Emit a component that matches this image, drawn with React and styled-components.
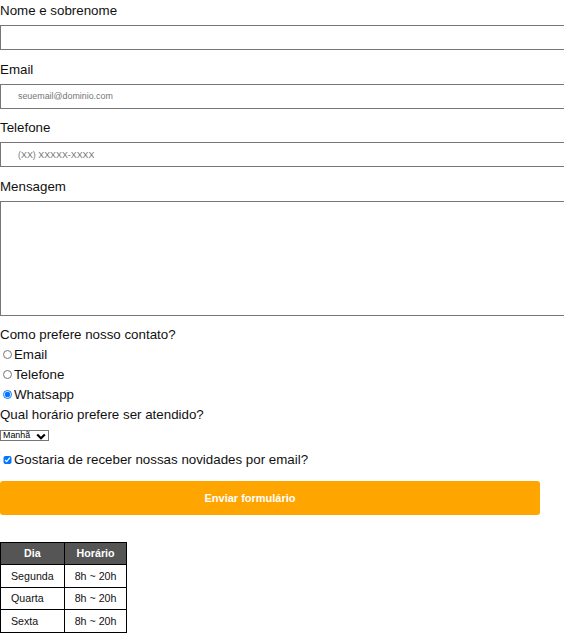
import React from "react";
import styled, { createGlobalStyle } from "styled-components";

const GlobalStyle = createGlobalStyle`
  html, body {
    margin: 0;
    padding: 0;
    background: #fff;
    overflow-x: hidden;
  }
  body {
    font-family: "Liberation Sans", Arial, sans-serif;
    color: #111;
  }
`;

const Form = styled.form`
  display: block;
  overflow: hidden;
  padding-bottom: 20px;
`;

const FieldLabel = styled.label`
  display: block;
  font-size: 13.33px;
  line-height: 21px;
  height: 21px;
`;

const TextInput = styled.input`
  display: block;
  box-sizing: content-box;
  width: 100%;
  height: 23px;
  margin: 4px 0 8.5px;
  padding: 0 17px;
  border: 1px solid #767676;
  border-radius: 0;
  font-family: "Liberation Sans", Arial, sans-serif;
  font-size: 8.89px;
  color: #111;
  outline: none;
  &::placeholder {
    color: #757575;
  }
`;

const TextArea = styled.textarea`
  display: block;
  box-sizing: content-box;
  width: 100%;
  height: 113.5px;
  margin: 4px 0 8.5px;
  padding: 0 17px;
  border: 1px solid #767676;
  border-radius: 0;
  resize: none;
  font-family: "Liberation Sans", Arial, sans-serif;
  font-size: 8.89px;
  outline: none;
`;

const Question = styled.p`
  margin: 0;
  font-size: 13.33px;
  line-height: 20px;
  height: 20px;
`;

const OptionRow = styled.label`
  display: flex;
  align-items: center;
  height: 20px;
  font-size: 13.33px;
  line-height: 20px;
`;

const Radio = styled.input.attrs({ type: "radio" })`
  width: 8.67px;
  height: 8.67px;
  margin: 0 2px 0 3.3px;
  flex: none;
`;

const Check = styled.input.attrs({ type: "checkbox" })`
  width: 8.67px;
  height: 8.67px;
  margin: 0 2px 0 3.3px;
  flex: none;
`;

const SelectWrap = styled.div`
  position: relative;
  width: 49px;
  height: 11px;
  margin: 5.5px 0 9px 0;
`;

const Select = styled.select`
  appearance: none;
  -webkit-appearance: none;
  display: block;
  box-sizing: border-box;
  width: 49px;
  height: 11px;
  margin: 0;
  padding: 0 0 0 2px;
  border: 1px solid #767676;
  border-radius: 0;
  background: #fff;
  font-family: "Liberation Sans", Arial, sans-serif;
  font-size: 8.89px;
  line-height: 9px;
  color: #000;
  outline: none;
`;

const Chevron = styled.svg`
  position: absolute;
  right: 3px;
  top: 2.5px;
  width: 10px;
  height: 7px;
  pointer-events: none;
`;

const SubmitButton = styled.button`
  display: block;
  box-sizing: border-box;
  width: 540px;
  height: 34px;
  margin: 11px 0 27px;
  padding: 0 40px 0 0;
  border: none;
  border-radius: 3px;
  background: #ffa500;
  color: #fff;
  font-family: "Liberation Sans", Arial, sans-serif;
  font-size: 11px;
  font-weight: bold;
  text-align: center;
  cursor: pointer;
`;

const Table = styled.table`
  border-collapse: collapse;
  font-size: 10.67px;
  line-height: 12px;
`;

const HeadCell = styled.th`
  background: #555;
  color: #fff;
  font-weight: bold;
  text-align: center;
  border: 1px solid #000;
  padding: 4.2px 10px 5.2px;
`;

const Cell = styled.td`
  color: #111;
  text-align: left;
  border: 1px solid #000;
  padding: 4.7px 10px;
`;

const horarios = [
  ["Segunda", "8h ~ 20h"],
  ["Quarta", "8h ~ 20h"],
  ["Sexta", "8h ~ 20h"],
];

export default function App() {
  return (
    <>
      <GlobalStyle />
      <Form onSubmit={(e) => e.preventDefault()}>
        <FieldLabel htmlFor="nome">Nome e sobrenome</FieldLabel>
        <TextInput id="nome" type="text" />

        <FieldLabel htmlFor="email">Email</FieldLabel>
        <TextInput id="email" type="email" placeholder="seuemail@dominio.com" />

        <FieldLabel htmlFor="tel">Telefone</FieldLabel>
        <TextInput id="tel" type="tel" placeholder="(XX) XXXXX-XXXX" />

        <FieldLabel htmlFor="msg">Mensagem</FieldLabel>
        <TextArea id="msg" />

        <Question>Como prefere nosso contato?</Question>
        <OptionRow>
          <Radio name="contato" value="email" />
          Email
        </OptionRow>
        <OptionRow>
          <Radio name="contato" value="telefone" />
          Telefone
        </OptionRow>
        <OptionRow>
          <Radio name="contato" value="whatsapp" defaultChecked />
          Whatsapp
        </OptionRow>

        <Question>Qual horário prefere ser atendido?</Question>
        <SelectWrap>
          <Select defaultValue="manha">
            <option value="manha">Manhã</option>
            <option value="tarde">Tarde</option>
            <option value="noite">Noite</option>
          </Select>
          <Chevron viewBox="0 0 10 7">
            <path d="M1.2 1.5 L5 5.2 L8.8 1.5" fill="none" stroke="#000" strokeWidth="2.2" />
          </Chevron>
        </SelectWrap>

        <OptionRow>
          <Check defaultChecked />
          Gostaria de receber nossas novidades por email?
        </OptionRow>

        <SubmitButton type="submit">Enviar formulário</SubmitButton>

        <Table>
          <thead>
            <tr>
              <HeadCell>Dia</HeadCell>
              <HeadCell>Horário</HeadCell>
            </tr>
          </thead>
          <tbody>
            {horarios.map(([dia, hora]) => (
              <tr key={dia}>
                <Cell>{dia}</Cell>
                <Cell>{hora}</Cell>
              </tr>
            ))}
          </tbody>
        </Table>
      </Form>
    </>
  );
}
